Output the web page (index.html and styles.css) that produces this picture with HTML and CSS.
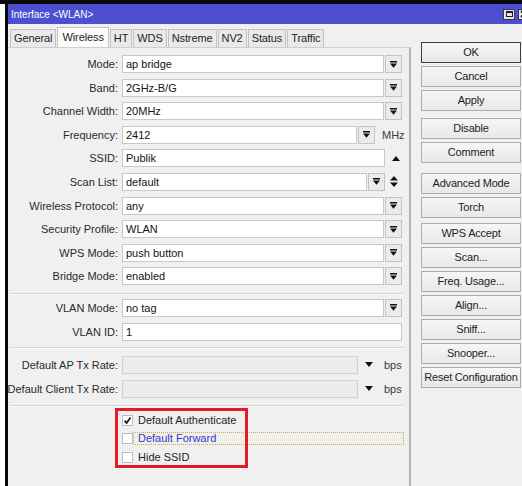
FILE: index.html
```html
<!DOCTYPE html>
<html>
<head>
<meta charset="utf-8">
<title>Interface &lt;WLAN&gt;</title>
<link rel="stylesheet" href="styles.css">
</head>
<body>
<div class="frame">
  <div class="window">
    <div class="titlebar">
      <span class="title">Interface &lt;WLAN&gt;</span>
      <span class="winctl">
        <span class="maxbtn"><span class="maxglyph"></span></span>
        <span class="closebtn"><svg width="8" height="8" viewBox="0 0 8 8"><path d="M1 1l6 6M7 1l-6 6" stroke="#111" stroke-width="1.8"/></svg></span>
      </span>
    </div>
    <div class="content">
      <div class="left">
        <div class="tabs">
          <span class="tab">General</span>
          <span class="tab active">Wireless</span>
          <span class="tab">HT</span>
          <span class="tab">WDS</span>
          <span class="tab">Nstreme</span>
          <span class="tab">NV2</span>
          <span class="tab">Status</span>
          <span class="tab">Traffic</span>
        </div>
        <div class="panel">
          <div class="group main-group">
            <div class="row">
              <span class="lbl">Mode:</span>
              <span class="input w-full">ap bridge</span>
              <span class="ddbtn"><svg width="7" height="7" viewBox="0 0 7 7"><rect width="7" height="1.5"/><path d="M0 2.6h7L3.5 6.8z"/></svg></span>
            </div>
            <div class="row">
              <span class="lbl">Band:</span>
              <span class="input w-full">2GHz-B/G</span>
              <span class="ddbtn"><svg width="7" height="7" viewBox="0 0 7 7"><rect width="7" height="1.5"/><path d="M0 2.6h7L3.5 6.8z"/></svg></span>
            </div>
            <div class="row">
              <span class="lbl">Channel Width:</span>
              <span class="input w-full">20MHz</span>
              <span class="ddbtn"><svg width="7" height="7" viewBox="0 0 7 7"><rect width="7" height="1.5"/><path d="M0 2.6h7L3.5 6.8z"/></svg></span>
            </div>
            <div class="row">
              <span class="lbl">Frequency:</span>
              <span class="input w-freq">2412</span>
              <span class="ddbtn"><svg width="7" height="7" viewBox="0 0 7 7"><rect width="7" height="1.5"/><path d="M0 2.6h7L3.5 6.8z"/></svg></span>
              <span class="unit unit-mhz">MHz</span>
            </div>
            <div class="row">
              <span class="lbl">SSID:</span>
              <span class="input w-ssid">Publik</span>
              <svg class="arrow arrow-up" width="8" height="5" viewBox="0 0 8 5"><path d="M0 5h8L4 0z"/></svg>
            </div>
            <div class="row">
              <span class="lbl">Scan List:</span>
              <span class="input w-scan">default</span>
              <span class="ddbtn"><svg width="7" height="7" viewBox="0 0 7 7"><rect width="7" height="1.5"/><path d="M0 2.6h7L3.5 6.8z"/></svg></span>
              <svg class="arrow arrow-updown" width="8" height="11" viewBox="0 0 8 11"><path d="M0 4.6h8L4 0z M0 6.4h8L4 11z"/></svg>
            </div>
            <div class="row">
              <span class="lbl">Wireless Protocol:</span>
              <span class="input w-full">any</span>
              <span class="ddbtn"><svg width="7" height="7" viewBox="0 0 7 7"><rect width="7" height="1.5"/><path d="M0 2.6h7L3.5 6.8z"/></svg></span>
            </div>
            <div class="row">
              <span class="lbl">Security Profile:</span>
              <span class="input w-full">WLAN</span>
              <span class="ddbtn"><svg width="7" height="7" viewBox="0 0 7 7"><rect width="7" height="1.5"/><path d="M0 2.6h7L3.5 6.8z"/></svg></span>
            </div>
            <div class="row">
              <span class="lbl">WPS Mode:</span>
              <span class="input w-full">push button</span>
              <span class="ddbtn"><svg width="7" height="7" viewBox="0 0 7 7"><rect width="7" height="1.5"/><path d="M0 2.6h7L3.5 6.8z"/></svg></span>
            </div>
            <div class="row">
              <span class="lbl">Bridge Mode:</span>
              <span class="input w-full">enabled</span>
              <span class="ddbtn"><svg width="7" height="7" viewBox="0 0 7 7"><rect width="7" height="1.5"/><path d="M0 2.6h7L3.5 6.8z"/></svg></span>
            </div>
          </div>

          <div class="sep sep-1"></div>

          <div class="group pair-group vlan-group">
            <div class="row">
              <span class="lbl">VLAN Mode:</span>
              <span class="input w-full">no tag</span>
              <span class="ddbtn"><svg width="7" height="7" viewBox="0 0 7 7"><rect width="7" height="1.5"/><path d="M0 2.6h7L3.5 6.8z"/></svg></span>
            </div>
            <div class="row">
              <span class="lbl">VLAN ID:</span>
              <span class="input w-id">1</span>
            </div>
          </div>

          <div class="sep sep-2"></div>

          <div class="group pair-group rate-group">
            <div class="row">
              <span class="lbl">Default AP Tx Rate:</span>
              <span class="input disabled w-rate"></span>
              <svg class="arrow arrow-down" width="8" height="5" viewBox="0 0 8 5"><path d="M0 0h8L4 5z"/></svg>
              <span class="unit unit-bps">bps</span>
            </div>
            <div class="row">
              <span class="lbl">Default Client Tx Rate:</span>
              <span class="input disabled w-rate"></span>
              <svg class="arrow arrow-down" width="8" height="5" viewBox="0 0 8 5"><path d="M0 0h8L4 5z"/></svg>
              <span class="unit unit-bps">bps</span>
            </div>
          </div>

          <div class="sep sep-3"></div>

          <div class="checks">
            <div class="check">
              <span class="box"><svg width="9" height="9" viewBox="0 0 9 9"><path d="M1.6 4.6l2 2.4 3.9-5.4" fill="none" stroke="#1c1c1c" stroke-width="1.7"/></svg></span>
              <span class="ctext">Default Authenticate</span>
            </div>
            <div class="check">
              <span class="box"></span>
              <span class="ctext focused">Default Forward</span>
            </div>
            <div class="check">
              <span class="box"></span>
              <span class="ctext">Hide SSID</span>
            </div>
          </div>

          <div class="highlight"></div>
        </div>
      </div>

      <div class="actions">
        <span class="btn default">OK</span>
        <span class="btn">Cancel</span>
        <span class="btn">Apply</span>
        <span class="btn gap-s">Disable</span>
        <span class="btn">Comment</span>
        <span class="btn gap-m">Advanced Mode</span>
        <span class="btn">Torch</span>
        <span class="btn gap-xs">WPS Accept</span>
        <span class="btn">Scan...</span>
        <span class="btn">Freq. Usage...</span>
        <span class="btn">Align...</span>
        <span class="btn">Sniff...</span>
        <span class="btn">Snooper...</span>
        <span class="btn">Reset Configuration</span>
      </div>
    </div>
  </div>
</div>
</body>
</html>
```

FILE: styles.css
```css
* {
  box-sizing: border-box;
}

html, body {
  margin: 0;
  padding: 0;
  background: #ffffff;
  width: 522px;
  height: 486px;
  overflow: hidden;
  font-family: "Liberation Sans", Arial, sans-serif;
  font-size: 11px;
  color: #1e1e1e;
}

.frame {
  height: 486px;
  border-top: 4px solid #0a0a0a;
}

.window {
  height: 100%;
  margin-left: 5px;
  border-left: 3px solid #0a0a0a;
  background: #f0f0f0;
  display: flex;
  flex-direction: column;
}

/* ---- title bar ---- */
.titlebar {
  height: 20px;
  flex: none;
  background: #4c4fd0;
  display: flex;
  align-items: center;
  padding-left: 3px;
  color: #ffffff;
  font-size: 10px;
}

.winctl {
  margin-left: auto;
  display: flex;
  align-items: center;
  gap: 3px;
  margin-right: -8px;
}

.maxbtn,
.closebtn {
  width: 12px;
  height: 11px;
  flex: none;
  background: #e6e6ea;
  border: 1px solid #3a3a44;
  display: flex;
  align-items: center;
  justify-content: center;
}

.maxglyph {
  width: 7px;
  height: 6px;
  border: 1px solid #202020;
  border-top-width: 2px;
}

/* ---- body ---- */
.content {
  flex: 1;
  display: flex;
}

.left {
  width: 403px;
  flex: none;
  display: flex;
  flex-direction: column;
}

.tabs {
  height: 23px;
  flex: none;
  display: flex;
  align-items: flex-end;
  padding-left: 2px;
}

.tab {
  height: 18px;
  padding: 0 3px;
  line-height: 17px;
  background: #e9e9e9;
  border: 1px solid #c2c2c2;
  border-bottom: none;
  margin-right: 1px;
  color: #1e1e1e;
  letter-spacing: -0.1px;
}

.tab.active {
  height: 20px;
  line-height: 18px;
  background: #fbfbfb;
  padding: 0 4px;
}

.panel {
  flex: 1;
  position: relative;
  border-top: 1px solid #cfcfcf;
  border-right: 2px solid #b3b3b3;
  padding-top: 7px;
}

.group {
  display: flex;
  flex-direction: column;
}

.main-group {
  gap: 5.6px;
}

.pair-group {
  gap: 6px;
}

.vlan-group {
  margin-top: 4px;
}

.rate-group {
  margin-top: 7px;
}

.row {
  height: 18px;
  display: flex;
  align-items: center;
}

.lbl {
  width: 110px;
  flex: none;
  margin-right: 4px;
  display: flex;
  justify-content: flex-end;
  white-space: nowrap;
  color: #2a2a2a;
}

.input {
  height: 18px;
  flex: none;
  background: #ffffff;
  border: 1px solid #c8c8c8;
  padding-left: 3px;
  line-height: 16px;
  color: #141414;
  white-space: nowrap;
}

.input.disabled {
  background: #ececec;
  border-color: #d0d0d0;
}

.w-full { width: 262px; }
.w-freq { width: 235px; }
.w-ssid { width: 263px; }
.w-scan { width: 245px; }
.w-id   { width: 280px; }
.w-rate { width: 236px; }

.ddbtn {
  width: 17px;
  height: 18px;
  flex: none;
  margin-left: 1px;
  background: #ebebeb;
  border: 1px solid #c3c3c3;
  display: flex;
  align-items: center;
  justify-content: center;
}

.ddbtn svg,
.arrow {
  fill: #111111;
  flex: none;
}

.arrow-up { margin-left: 7px; }
.arrow-updown { margin-left: 5px; }
.arrow-down { margin-left: 7px; }

.unit {
  color: #3a3a3a;
  flex: none;
}

.unit-mhz { margin-left: 7px; }
.unit-bps { margin-left: 11px; }

.sep {
  width: 395px;
  margin-left: 2px;
  height: 2px;
  border-top: 1px solid #d6d6d6;
  border-bottom: 1px solid #fafafa;
}

.sep-1 { margin-top: 7.6px; }
.sep-2 { margin-top: 6px; }
.sep-3 { margin-top: 7px; }

/* ---- check boxes ---- */
.checks {
  margin-top: 4px;
  padding-left: 114px;
  display: flex;
  flex-direction: column;
}

.check {
  height: 18.5px;
  display: flex;
  align-items: center;
}

.box {
  width: 11px;
  height: 11px;
  flex: none;
  background: #ffffff;
  border: 1px solid #bdbdbd;
  display: flex;
  align-items: center;
  justify-content: center;
}

.ctext {
  height: 13px;
  line-height: 11px;
  padding-left: 4px;
  border: 1px solid transparent;
  color: #1e1e1e;
  white-space: nowrap;
}

.ctext.focused {
  width: 271px;
  border: 1px dotted #b9b15a;
  background: #f1f0e8;
  color: #3535d6;
}

/* red marker frame drawn over the check boxes */
.highlight {
  position: absolute;
  left: 107px;
  top: 360px;
  width: 133px;
  height: 60px;
  border: 3px solid #e31c27;
  pointer-events: none;
}

/* ---- action buttons ---- */
.actions {
  width: 100px;
  margin-left: 10px;
  padding-top: 18px;
  display: flex;
  flex-direction: column;
  gap: 3px;
}

.btn {
  height: 21px;
  flex: none;
  border: 1px solid #acacac;
  background: linear-gradient(#f6f6f6, #e8e8e8);
  text-align: center;
  line-height: 19px;
  color: #1e1e1e;
  white-space: nowrap;
  letter-spacing: -0.2px;
}

.btn.default {
  border-color: #3e3e3e;
}

.gap-xs { margin-top: 2px; }
.gap-s  { margin-top: 4px; }
.gap-m  { margin-top: 7px; }
```
